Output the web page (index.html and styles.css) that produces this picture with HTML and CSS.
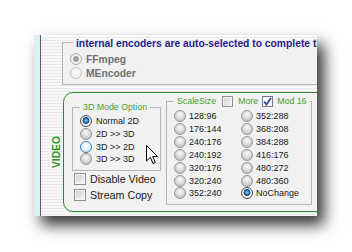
FILE: index.html
```html
<!DOCTYPE html>
<html lang="en">
<head>
  <meta charset="UTF-8" />
  <meta name="viewport" content="width=device-width, initial-scale=1.0"/>
  <title>Video options</title>
  <link rel="stylesheet" href="styles.css">
</head>
<body>
  <div class="frame">
    <div class="edge"></div>
    <div class="content">
      <fieldset class="group encoders">
        <legend>internal encoders are auto-selected to complete the job</legend>
        <div class="opt disabled"><span class="radio on"></span>FFmpeg</div>
        <div class="opt disabled"><span class="radio"></span>MEncoder</div>
      </fieldset>

      <div class="video-row">
        <div class="video-label"><span>VIDEO</span></div>
        <div class="video-box">
          <div class="mode-col">
            <fieldset class="group mode">
              <legend>3D Mode Option</legend>
              <div class="opt"><span class="radio on"></span>Normal 2D</div>
              <div class="opt"><span class="radio"></span>2D &gt;&gt; 3D</div>
              <div class="opt"><span class="radio hover"></span>3D &gt;&gt; 2D</div>
              <div class="opt"><span class="radio"></span>3D &gt;&gt; 3D</div>
            </fieldset>
            <div class="check"><span class="box"></span>Disable Video</div>
            <div class="check"><span class="box"></span>Stream Copy</div>
          </div>

          <fieldset class="group scale">
            <legend>
              <span>ScaleSize</span>
              <span class="box small"></span>
              <span>More</span>
              <span class="box small checked">
                <svg width="9" height="9" viewBox="0 0 9 9"><path d="M1 4.5 L3.5 7.5 L8 1" fill="none" stroke="#2b4f94" stroke-width="1.8"/></svg>
              </span>
              <span>Mod 16</span>
            </legend>
            <div class="sizes">
              <div class="opt"><span class="radio"></span>128:96</div>
              <div class="opt"><span class="radio"></span>176:144</div>
              <div class="opt"><span class="radio"></span>240:176</div>
              <div class="opt"><span class="radio"></span>240:192</div>
              <div class="opt"><span class="radio"></span>320:176</div>
              <div class="opt"><span class="radio"></span>320:240</div>
              <div class="opt"><span class="radio"></span>352:240</div>
              <div class="opt"><span class="radio"></span>352:288</div>
              <div class="opt"><span class="radio"></span>368:208</div>
              <div class="opt"><span class="radio"></span>384:288</div>
              <div class="opt"><span class="radio"></span>416:176</div>
              <div class="opt"><span class="radio"></span>480:272</div>
              <div class="opt"><span class="radio"></span>480:360</div>
              <div class="opt"><span class="radio on"></span>NoChange</div>
            </div>
          </fieldset>
        </div>
      </div>

      <svg class="cursor" width="13" height="20" viewBox="0 0 13 20">
        <path d="M0.5 0.5 L0.5 16 L4.3 12.3 L7 18.5 L9.3 17.5 L6.7 11.5 L11.5 11.5 Z" fill="#fff" stroke="#000" stroke-width="1"/>
      </svg>
    </div>
  </div>
</body>
</html>
```

FILE: styles.css
```css
* { box-sizing: border-box; }
body {
  margin: 0;
  width: 352px;
  height: 252px;
  overflow: hidden;
  background: #fff;
  font-family: 'Liberation Sans', Arial, sans-serif;
  color: #1a1a1a;
}
.frame {
  display: flex;
  width: 283px;
  height: 181px;
  margin: 35px 0 0 34px;
  box-shadow: 7px 9px 14px rgba(0, 0, 0, 0.8);
}
.edge {
  width: 7px;
  background: #dbeff6;
  border-right: 1px solid #56616b;
}
.content {
  position: relative;
  flex: 1;
  overflow: hidden;
  background: repeating-linear-gradient(#f8f8f8 0 2px, #e9e9ed 2px 3px);
}
.group {
  margin: 0;
  min-width: 0;
  border: 1px solid #b4b4b4;
  background: #f1f1f1;
}
.group legend {
  white-space: nowrap;
  padding: 0 3px;
}

/* encoder choice */
.encoders {
  width: 320px;
  margin: -1px 0 0 21px;
  padding: 2px 0 4px 7px;
}
.encoders legend {
  margin-left: 3px;
  padding-top: 4px;
  font-size: 10.3px;
  line-height: 12px;
  font-weight: bold;
  color: #1f1f86;
}
.encoders .opt {
  height: 14px;
  font-size: 10.3px;
  font-weight: bold;
}
.opt.disabled { color: #707070; }

.opt {
  display: flex;
  align-items: center;
  font-size: 9px;
  white-space: nowrap;
}
.radio {
  flex: none;
  width: 12px;
  height: 12px;
  margin-right: 4px;
  border-radius: 50%;
  border: 1px solid #979797;
  background: radial-gradient(circle at 50% 35%, #fafafa 0, #dedede 3.5px, #c6c6c6 6px);
}
.radio.on {
  border-color: #4e4e4e;
  background: radial-gradient(circle at 50% 45%, #9ad6f7 0, #2a77b5 2px, #15507f 3.2px, #ffffff 3.8px, #dcdcdc 6px);
}
.radio.hover {
  border-color: #3c7fb1;
  background: radial-gradient(circle at 50% 35%, #ffffff, #bfe2f9);
}
.disabled .radio {
  border-color: #c6c6c6;
  background: radial-gradient(circle at 50% 40%, #fdfdfd, #e6e6e6);
}
.disabled .radio.on {
  border-color: #a8a8a8;
  background: radial-gradient(circle, #a0a0a0 0 2.3px, #c9c9c9 3px, #f3f3f3 3.6px);
}

/* video section */
.video-row {
  display: flex;
  width: 300px;
  height: 120px;
  margin-top: 7px;
}
.video-label {
  width: 22px;
  display: flex;
  align-items: center;
  justify-content: center;
  padding-left: 8px;
}
.video-label span {
  writing-mode: vertical-rl;
  transform: rotate(180deg);
  font-size: 10.3px;
  line-height: 11px;
  font-weight: bold;
  color: #36961f;
}
.video-box {
  flex: 1;
  display: flex;
  align-items: flex-start;
  gap: 5px;
  padding: 2px 0 0 8px;
  border: 1px solid #2f8a2f;
  border-radius: 10px;
  background: #f1f1f1;
  box-shadow: 0 1px 0 #d6ecd0;
}
.group.mode legend,
.group.scale legend {
  font-size: 8.8px;
  color: #46a02b;
}
.mode {
  width: 89px;
  margin-top: 7px;
  padding: 2px 0 4px 7px;
}
.mode legend { line-height: 11px; }
.mode .opt { height: 12.67px; }

.check {
  display: flex;
  align-items: center;
  height: 15.5px;
  padding-left: 2px;
  font-size: 10.7px;
}
.check:first-of-type { margin-top: 1px; }
.box {
  flex: none;
  width: 12px;
  height: 12px;
  margin-right: 4px;
  border: 1px solid #8e8f8f;
  background: linear-gradient(135deg, #cdcdcd, #f8f8f8);
  box-shadow: inset 0 0 0 1px #f4f4f4;
}

.scale {
  width: 146px;
  padding: 3px 0 4px 7px;
}
.scale legend {
  display: flex;
  align-items: center;
  height: 12px;
  line-height: 12px;
}
.box.small {
  width: 11px;
  height: 11px;
  margin: 0 5px 0 6px;
}
.box.checked {
  display: flex;
  align-items: center;
  justify-content: center;
  margin: 0 4px 0 4px;
  border-color: #6a7a96;
  background: #fff;
  box-shadow: none;
}
.sizes {
  display: grid;
  grid-auto-flow: column;
  grid-template-columns: 67px 1fr;
  grid-template-rows: repeat(7, 12.83px);
}
.sizes .radio { margin-right: 3px; }

.cursor {
  position: absolute;
  left: 105px;
  top: 110px;
}
```
